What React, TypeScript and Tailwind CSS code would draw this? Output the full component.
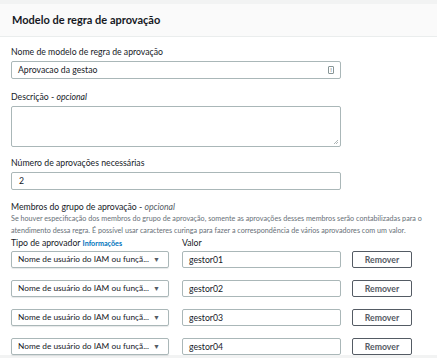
import React from 'react';

const rows = ['gestor01', 'gestor02', 'gestor03', 'gestor04'];

const Field: React.FC<{ label: React.ReactNode; children: React.ReactNode }> = ({ label, children }) => (
  <div>
    <div className="h-[12px] text-[8.7px] leading-[12px] text-[#16191f] mb-[3px]">{label}</div>
    {children}
  </div>
);

export default function App() {
  return (
    <div className="w-[437px] h-[358px] overflow-hidden bg-[#f2f3f3] pt-[4px] font-['Lato',sans-serif] text-[#16191f]">
      <div className="bg-white">
        <div className="h-[33px] bg-[#fafafa] border-b border-[#eaeded] flex items-center px-[12px]">
          <h2 className="text-[11px] font-bold">Modelo de regra de aprovação</h2>
        </div>
        <div className="px-[11px] pt-[9px]">
          <Field label="Nome de modelo de regra de aprovação">
            <div className="w-[330px] h-[18px] border border-[#aab7b8] rounded-[2px] flex items-center justify-between pl-[6px] pr-[6px] text-[8.7px]">
              <span>Aprovacao da gestao</span>
              <span className="w-[6px] h-[8px] border border-[#879596] rounded-[1px] flex items-center justify-center text-[6px] leading-none text-[#545b64]">!</span>
            </div>
          </Field>
          <div className="mt-[12px]">
            <Field label={<>Descrição - <i>opcional</i></>}>
              <div className="relative w-[330px] h-[41px] border border-[#aab7b8] rounded-[2px]">
                <svg className="absolute right-[1px] bottom-[1px]" width="6" height="6" viewBox="0 0 6 6">
                  <path d="M5 1 L1 5 M5 3 L3 5" stroke="#9aa4a5" strokeWidth="0.8" />
                </svg>
              </div>
            </Field>
          </div>
          <div className="mt-[10px]">
            <Field label="Número de aprovações necessárias">
              <div className="w-[330px] h-[18px] border border-[#aab7b8] rounded-[2px] flex items-center pl-[7px] text-[8.7px]">2</div>
            </Field>
          </div>
          <div className="mt-[11px]">
            <div className="h-[12px] text-[8.7px] leading-[12px]">Membros do grupo de aprovação - <i className="text-[#545b64]">opcional</i></div>
            <p className="h-[24px] text-[7.2px] leading-[12px] text-[#687078] whitespace-nowrap">
              Se houver especificação dos membros do grupo de aprovação, somente as aprovações desses membros serão contabilizadas para o<br />
              atendimento dessa regra. É possível usar caracteres curinga para fazer a correspondência de vários aprovadores com um valor.
            </p>
          </div>
          <div className="h-[12px] flex items-center text-[8.7px] leading-[12px]">
            <div className="w-[171px]">Tipo de aprovador <span className="text-[#0073bb] text-[7.2px] font-bold">Informações</span></div>
            <div>Valor</div>
          </div>
          <div className="mt-[2px] flex flex-col gap-[12px]">
            {rows.map(r => (
              <div key={r} className="flex items-center h-[17px]">
                <div className="w-[158px] h-[17px] border border-[#aab7b8] rounded-[2px] flex items-center justify-between pl-[6px] pr-[8px] text-[8.3px] shadow-[0_1px_1px_rgba(0,28,36,0.1)]">
                  <span className="whitespace-nowrap">Nome de usuário do IAM ou funçã...</span>
                  <span className="text-[7px] text-[#545b64]">▼</span>
                </div>
                <div className="ml-[13px] w-[159px] h-[17px] border border-[#aab7b8] rounded-[2px] flex items-center pl-[6px] text-[8.7px]">{r}</div>
                <div className="ml-[11px] w-[60px] h-[17px] border border-[#545b64] rounded-[2px] flex items-center justify-center text-[8.7px] font-bold text-[#545b64]">Remover</div>
              </div>
            ))}
          </div>
        </div>
      </div>
    </div>
  );
}
